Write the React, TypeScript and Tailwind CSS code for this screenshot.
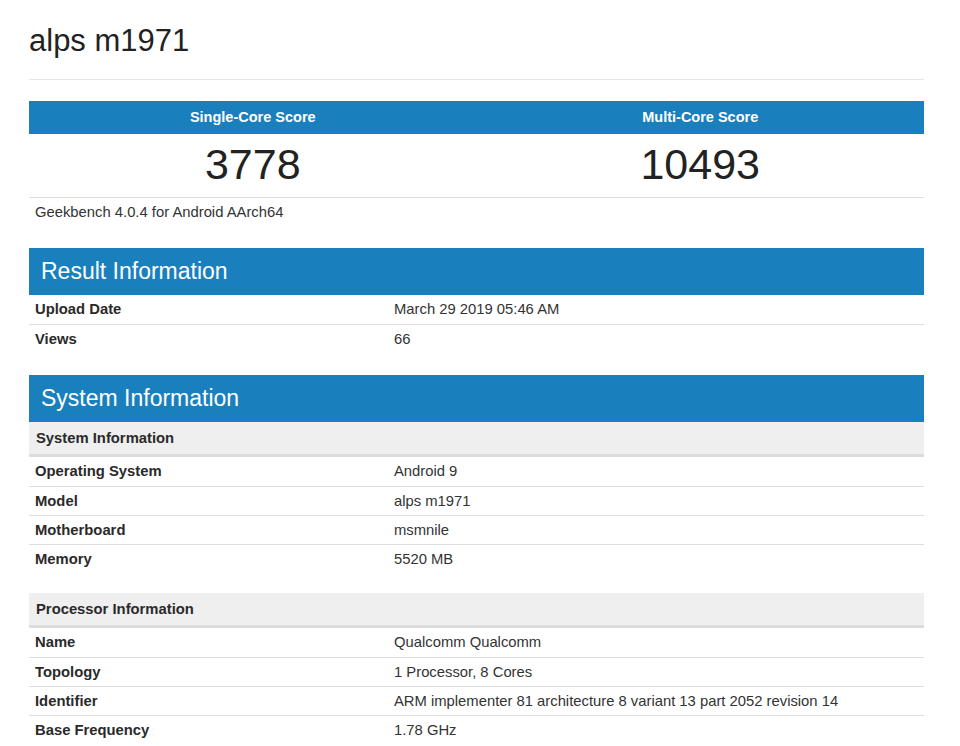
import React from "react"

const resultRows = [
    ["Upload Date", "March 29 2019 05:46 AM"],
    ["Views", "66"],
]

const systemRows = [
    ["Operating System", "Android 9"],
    ["Model", "alps m1971"],
    ["Motherboard", "msmnile"],
    ["Memory", "5520 MB"],
]

const processorRows = [
    ["Name", "Qualcomm Qualcomm"],
    ["Topology", "1 Processor, 8 Cores"],
    ["Identifier", "ARM implementer 81 architecture 8 variant 13 part 2052 revision 14"],
    ["Base Frequency", "1.78 GHz"],
]

const Rows = ({ rows }: { rows: string[][] }) => (
    <div className="flex flex-col">
        {rows.map(([label, value], i) => (
            <div
                key={label}
                className={`flex items-center h-[29px] ${i > 0 ? "border-t border-[#dedede]" : ""}`}
            >
                <div className="w-[365px] pl-[6px] font-bold text-[#2a2a2a]">{label}</div>
                <div className="text-[#333]">{value}</div>
            </div>
        ))}
    </div>
)

const SectionHeader = ({ title }: { title: string }) => (
    <div className="h-[47px] bg-[#1a80bd] flex items-center pl-[12px] text-white text-[23px]">
        {title}
    </div>
)

const SubHeader = ({ title }: { title: string }) => (
    <div className="h-[35px] pt-[1px] bg-[#efefef] border-b-[3px] border-[#dcdcdc] flex items-center pl-[7px] font-bold text-[#2a2a2a]">
        {title}
    </div>
)

const App = () => {
    return (
        <div
            className="w-[960px] h-[746px] overflow-hidden bg-white text-[14.8px] text-[#333]"
            style={{ fontFamily: '"Liberation Sans", Arial, sans-serif' }}
        >
            <div className="ml-[29px] w-[895px]">
                <h1 className="pt-[23px] h-[58px] leading-[36px] text-[31px] text-[#222]">
                    alps m1971
                </h1>
                <div className="mt-[21px] border-t border-[#e6e6e6]" />

                <div className="mt-[21px]">
                    <div className="flex h-[33px] pt-[1px] bg-[#1a80bd] text-white font-bold text-[14.5px]">
                        <div className="flex-1 flex items-center justify-center">Single-Core Score</div>
                        <div className="flex-1 flex items-center justify-center">Multi-Core Score</div>
                    </div>
                    <div className="flex h-[64px] pb-[3px] border-b border-[#dedede] text-[43px] text-[#222]">
                        <div className="flex-1 flex items-center justify-center">3778</div>
                        <div className="flex-1 flex items-center justify-center">10493</div>
                    </div>
                    <div className="h-[29px] flex items-center pl-[6px] text-[#333]">
                        Geekbench 4.0.4 for Android AArch64
                    </div>
                </div>

                <div className="mt-[21px]">
                    <SectionHeader title="Result Information" />
                    <Rows rows={resultRows} />
                </div>

                <div className="mt-[22px]">
                    <SectionHeader title="System Information" />
                    <SubHeader title="System Information" />
                    <Rows rows={systemRows} />
                    <div className="mt-[20px]">
                        <SubHeader title="Processor Information" />
                        <Rows rows={processorRows} />
                    </div>
                </div>
            </div>
        </div>
    )
}

export default App
